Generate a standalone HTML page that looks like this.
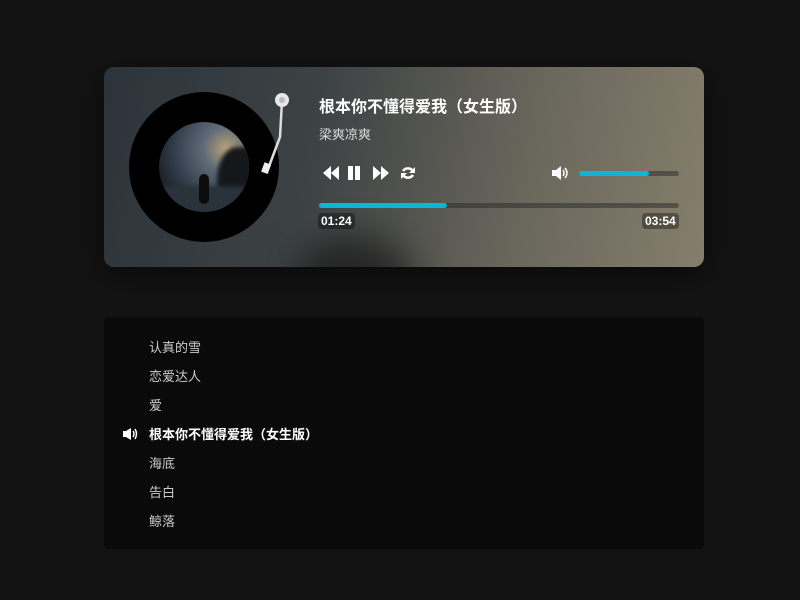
<!DOCTYPE html>
<html><head><meta charset="utf-8"><style>
body{margin:0;width:800px;height:600px;background:#131313;font-family:"Liberation Sans","Noto Sans CJK SC",sans-serif;position:relative;overflow:hidden}
.card{position:absolute;left:104px;top:67px;width:600px;height:200px;border-radius:10px;overflow:hidden;
background:linear-gradient(100deg,#2c343b 0%,#3d4244 35%,#6a675c 70%,#857e6c 100%);box-shadow:0 8px 30px rgba(0,0,0,.5)}
.blob{position:absolute;left:190px;top:170px;width:120px;height:80px;border-radius:50%;background:rgba(20,20,20,.7);filter:blur(18px)}
.rec{position:absolute;left:25px;top:25px;width:150px;height:150px;border-radius:50%;background:#000}
.img{position:absolute;left:30px;top:30px;width:90px;height:90px;border-radius:50%;
background:radial-gradient(circle at 75% 30%,#b9a478 0%,#5e6a78 25%,#34404e 55%,#1a1e22 80%);overflow:hidden}
.t{position:absolute;color:#fff}
.bar{position:absolute;height:5px;border-radius:3px;background:rgba(40,40,40,.5)}
.fill{position:absolute;left:0;top:0;height:5px;border-radius:3px;background:#0fb4d6}
.time{position:absolute;top:146px;font-size:12px;color:#fff;background:rgba(0,0,0,.35);border-radius:4px;padding:1px 3px;font-weight:bold}
.list{position:absolute;left:104px;top:317px;width:600px;height:232px;background:#0a0a0a;border-radius:4px}
.it{position:absolute;left:45px;font-size:13px;color:#ccc}
</style></head><body>
<div class="card">
<div class="blob"></div>
<div class="rec"><div class="img">
<div style="position:absolute;left:58px;top:25px;width:40px;height:65px;background:#15181a;border-radius:50% 0 0 40%;filter:blur(2px)"></div>
<div style="position:absolute;left:0;top:64px;width:90px;height:30px;background:#2a323b;filter:blur(2px)"></div>
<div style="position:absolute;left:40px;top:52px;width:10px;height:30px;background:#0c0c0c;border-radius:5px"></div>
</div></div>
<svg style="position:absolute;left:150px;top:20px" width="40" height="90">
<path d="M28 14 L26 50 L14 82" stroke="#ddd" stroke-width="2.5" fill="none"/>
<rect x="9" y="76" width="7" height="10" fill="#eee" transform="rotate(20 12 80)"/>
<circle cx="28" cy="13" r="7" fill="#e8e8e8"/><circle cx="28" cy="13" r="3" fill="#bbb"/>
</svg>
<div class="t" style="left:215px;top:26px;font-size:16px;font-weight:bold">根本你不懂得爱我（女生版）</div>
<div class="t" style="left:215px;top:57px;font-size:13px;color:#ddd">梁爽凉爽</div>
<svg style="position:absolute;left:219px;top:99px" width="100" height="14" fill="#fff">
<path d="M8 0 L0 7 L8 14Z M16 0 L8 7 L16 14Z"/>
<rect x="25" y="0" width="5" height="14"/><rect x="32" y="0" width="5" height="14"/>
<path d="M50 0 L58 7 L50 14Z M58 0 L66 7 L58 14Z"/>
<path d="M90 5 A6 6 0 0 0 80 5 M80 9 A6 6 0 0 0 90 9" stroke="#fff" stroke-width="2.5" fill="none"/>
<path d="M92 1 L92 7 L86 7Z M78 13 L78 7 L84 7Z"/>
</svg>
<svg style="position:absolute;left:448px;top:99px" width="18" height="14" fill="#fff">
<path d="M0 4 H4 L9 0 V14 L4 10 H0Z"/>
<path d="M11 4 Q13 7 11 10 M13 2 Q17 7 13 12" stroke="#fff" stroke-width="1.5" fill="none"/>
</svg>
<div class="bar" style="left:475px;top:104px;width:100px"><div class="fill" style="width:70px"></div></div>
<div class="bar" style="left:215px;top:136px;width:360px"><div class="fill" style="width:128px"></div></div>
<div class="time" style="left:214px">01:24</div>
<div class="time" style="left:538px">03:54</div>
</div>
<div class="list">
<div class="it" style="top:20px">认真的雪</div>
<div class="it" style="top:49px">恋爱达人</div>
<div class="it" style="top:78px">爱</div>
<svg style="position:absolute;left:19px;top:111px" width="16" height="12" fill="#fff"><path d="M0 3 H3 L8 0 V12 L3 9 H0Z"/><path d="M10 3 Q12 6 10 9 M12 1 Q15 6 12 11" stroke="#fff" stroke-width="1.5" fill="none"/></svg>
<div class="it" style="top:107px;color:#fff;font-weight:bold">根本你不懂得爱我（女生版）</div>
<div class="it" style="top:136px">海底</div>
<div class="it" style="top:165px">告白</div>
<div class="it" style="top:194px">鲸落</div>
</div>
</body></html>
